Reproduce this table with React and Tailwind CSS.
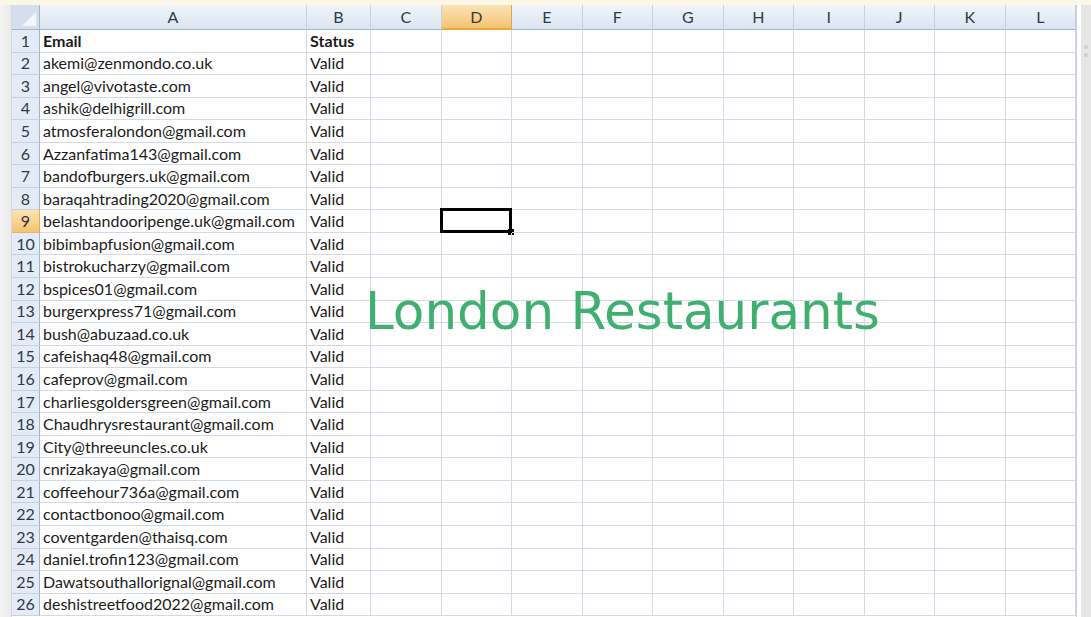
import React from "react";

const rows = [
  ["Email", "Status", true],
  ["akemi@zenmondo.co.uk", "Valid"],
  ["angel@vivotaste.com", "Valid"],
  ["ashik@delhigrill.com", "Valid"],
  ["atmosferalondon@gmail.com", "Valid"],
  ["Azzanfatima143@gmail.com", "Valid"],
  ["bandofburgers.uk@gmail.com", "Valid"],
  ["baraqahtrading2020@gmail.com", "Valid"],
  ["belashtandooripenge.uk@gmail.com", "Valid"],
  ["bibimbapfusion@gmail.com", "Valid"],
  ["bistrokucharzy@gmail.com", "Valid"],
  ["bspices01@gmail.com", "Valid"],
  ["burgerxpress71@gmail.com", "Valid"],
  ["bush@abuzaad.co.uk", "Valid"],
  ["cafeishaq48@gmail.com", "Valid"],
  ["cafeprov@gmail.com", "Valid"],
  ["charliesgoldersgreen@gmail.com", "Valid"],
  ["Chaudhrysrestaurant@gmail.com", "Valid"],
  ["City@threeuncles.co.uk", "Valid"],
  ["cnrizakaya@gmail.com", "Valid"],
  ["coffeehour736a@gmail.com", "Valid"],
  ["contactbonoo@gmail.com", "Valid"],
  ["coventgarden@thaisq.com", "Valid"],
  ["daniel.trofin123@gmail.com", "Valid"],
  ["Dawatsouthallorignal@gmail.com", "Valid"],
  ["deshistreetfood2022@gmail.com", "Valid"],
];

const extraCols = ["C", "D", "E", "F", "G", "H", "I", "J", "K", "L"];

const font = { fontFamily: "Lato, 'Open Sans', sans-serif" };

function ColHeader({ label, w, active }) {
  return (
    <div
      className={
        "flex h-full shrink-0 items-center justify-center border-r text-[16px] " +
        (active
          ? "border-[#e0a550] bg-gradient-to-b from-[#fae3b4] to-[#f3c472] text-[#3a3a3a] border-b-2 border-b-[#f0a83a]"
          : "border-[#c5d2e2] bg-gradient-to-b from-[#f1f5fa] to-[#dbe4ef] text-[#2d3a4a] border-b border-b-[#9eb6ce]")
      }
      style={{ width: w }}
    >
      {label}
    </div>
  );
}

export default function App() {
  return (
    <div
      className="flex h-[617px] w-[1091px] flex-col overflow-hidden bg-white"
      style={font}
    >
      <div className="h-[5px] shrink-0 bg-[#fbf6e6]" />
      <div className="flex min-h-0 flex-1">
        {/* left strip */}
        <div className="w-[12px] shrink-0 border-r border-[#d7d7d7] bg-gradient-to-r from-[#f3f3f3] to-[#ebebeb]" />

        {/* grid */}
        <div className="relative flex w-[1065px] shrink-0 flex-col border-r border-[#c8d0dc]">
          {/* header row */}
          <div className="flex h-[25px] shrink-0">
            <div className="relative h-full w-[28px] shrink-0 border-r border-b border-[#9eb6ce] bg-[#d5deec]">
              <div
                className="absolute bottom-[3px] right-[3px] h-0 w-0"
                style={{
                  borderLeft: "14px solid transparent",
                  borderBottom: "14px solid #f4f6fa",
                }}
              />
            </div>
            <ColHeader label="A" w="267px" />
            <ColHeader label="B" w="64px" />
            {extraCols.map((c) => (
              <ColHeader key={c} label={c} w="70.5px" active={c === "D"} />
            ))}
          </div>

          {rows.map(([email, status, bold], i) => {
            const n = i + 1;
            const activeRow = n === 9;
            return (
              <div key={n} className="flex h-[22.56px] shrink-0 text-[16px] text-[#1c1c1c]">
                <div
                  className={
                    "flex h-full w-[28px] shrink-0 items-center justify-center border-r border-b text-[16px] " +
                    (activeRow
                      ? "border-r-[#f0a83a] border-b-[#e6b46a] bg-gradient-to-b from-[#fae3b4] to-[#f3c472] text-[#333]"
                      : "border-r-[#9eb6ce] border-b-[#c5d2e2] bg-[#e4ebf6] text-[#2d3a4a]")
                  }
                >
                  {n}
                </div>
                <div
                  className={
                    "flex h-full w-[267px] shrink-0 items-center whitespace-nowrap border-r border-b border-[#d4dae5] pl-[3px] " +
                    (bold ? "font-bold" : "")
                  }
                >
                  {email}
                </div>
                <div
                  className={
                    "flex h-full w-[64px] shrink-0 items-center border-r border-b border-[#d4dae5] pl-[3px] " +
                    (bold ? "font-bold" : "")
                  }
                >
                  {status}
                </div>
                {extraCols.map((c) => (
                  <div
                    key={c}
                    className="relative h-full w-[70.5px] shrink-0 border-r border-b border-[#d4dae5]"
                  >
                    {activeRow && c === "D" && (
                      <div className="absolute -left-[2px] -top-[2px] -right-[1px] -bottom-[1px] border-[3px] border-black">
                        <div className="absolute -bottom-[5px] -right-[5px] h-[6px] w-[6px] bg-black" />
                      </div>
                    )}
                  </div>
                ))}
              </div>
            );
          })}

          {/* overlay text */}
          <div
            className="pointer-events-none absolute left-[353px] top-[281px] whitespace-nowrap text-[51.6px] leading-none text-[#3fb06f]"
            style={{ fontFamily: "'DejaVu Sans', Verdana, sans-serif" }}
          >
            London Restaurants
          </div>
        </div>

        {/* right gutter */}
        <div className="flex flex-1 bg-white">
          <div className="w-[4px] bg-white" />
          <div className="relative flex-1 bg-[#e6e6e6]">
            <div className="absolute left-[3px] top-[40px] h-[4px] w-[4px] rounded-full bg-[#cfcfcf]" />
            <div className="absolute left-[3px] top-[48px] h-[4px] w-[4px] rounded-full bg-[#cfcfcf]" />
          </div>
        </div>
      </div>
    </div>
  );
}
